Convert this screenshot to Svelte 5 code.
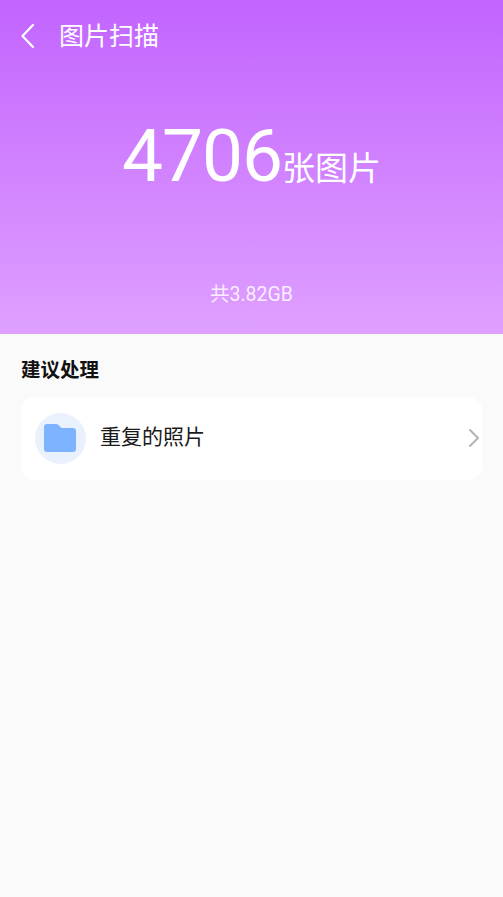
<script>
	const items = [{ name: '重复的照片' }];
</script>

<div class="page">
	<header class="hero">
		<div class="topbar">
			<svg class="back" viewBox="0 0 18 26" width="18" height="26">
				<path d="M14 2 L3.5 13 L14 24" fill="none" stroke="#fff" stroke-width="2.2" stroke-linecap="round" stroke-linejoin="round" />
			</svg>
			<span class="title">图片扫描</span>
		</div>
		<div class="count">
			<span class="num">4706</span><span class="unit">张图片</span>
		</div>
		<p class="total">共3.82GB</p>
	</header>

	<section class="body">
		<h2 class="head">建议处理</h2>
		{#each items as it}
			<div class="card">
				<span class="badge">
					<svg viewBox="0 0 32 28" width="32" height="28">
						<path d="M3 0 H12 Q13.5 0 14.5 1 L17.5 4 H29 Q32 4 32 7 V25 Q32 28 29 28 H3 Q0 28 0 25 V3 Q0 0 3 0 Z" fill="#7db3ff" />
					</svg>
				</span>
				<span class="name">{it.name}</span>
				<svg class="chev" viewBox="0 0 12 20" width="12" height="20">
					<path d="M2 2 L10 10 L2 18" fill="none" stroke="#b4b4b4" stroke-width="2" stroke-linecap="round" stroke-linejoin="round" />
				</svg>
			</div>
		{/each}
	</section>
</div>

<style>
	:global(body) {
		margin: 0;
		background: #fafafa;
	}
	.page {
		width: 503px;
		height: 897px;
		display: flex;
		flex-direction: column;
		font-family: 'Roboto', 'Noto Sans CJK SC', sans-serif;
		background: #fafafa;
		overflow: hidden;
	}
	.hero {
		height: 334px;
		box-sizing: border-box;
		background: linear-gradient(180deg, #c264ff 0%, #dfa0ff 100%);
		color: #fff;
		display: flex;
		flex-direction: column;
	}
	.topbar {
		display: flex;
		align-items: center;
		height: 36px;
		margin-top: 18px;
		padding-left: 19px;
	}
	.title {
		margin-left: 22px;
		padding-top: 2px;
		font-size: 25px;
		line-height: 36px;
	}
	.count {
		display: flex;
		justify-content: center;
		align-items: baseline;
		margin-top: 62px;
		line-height: 80px;
	}
	.num {
		font-size: 73px;
		letter-spacing: -1px;
	}
	.unit {
		font-size: 33px;
		position: relative;
		top: -1px;
	}
	.total {
		margin: 72px 0 0;
		text-align: center;
		font-size: 19.5px;
		line-height: 26px;
		color: rgba(255, 255, 255, 0.85);
	}
	.body {
		padding: 0 21px;
	}
	.head {
		margin: 24px 0 0;
		font-size: 19.5px;
		line-height: 26px;
		font-weight: 700;
		color: #111;
	}
	.card {
		margin-top: 13px;
		height: 83px;
		box-sizing: border-box;
		padding: 0 2px 0 14px;
		display: flex;
		align-items: center;
		background: #fff;
		border-radius: 14px;
	}
	.badge {
		width: 51px;
		height: 51px;
		border-radius: 50%;
		background: #e9f1fd;
		display: flex;
		align-items: center;
		justify-content: center;
	}
	.badge svg {
		margin: 0 2px 2px 0;
	}
	.name {
		margin-left: 14px;
		padding-bottom: 8px;
		font-size: 21px;
		color: #1a1a1a;
	}
	.chev {
		margin-left: auto;
		margin-bottom: 2px;
	}
</style>
